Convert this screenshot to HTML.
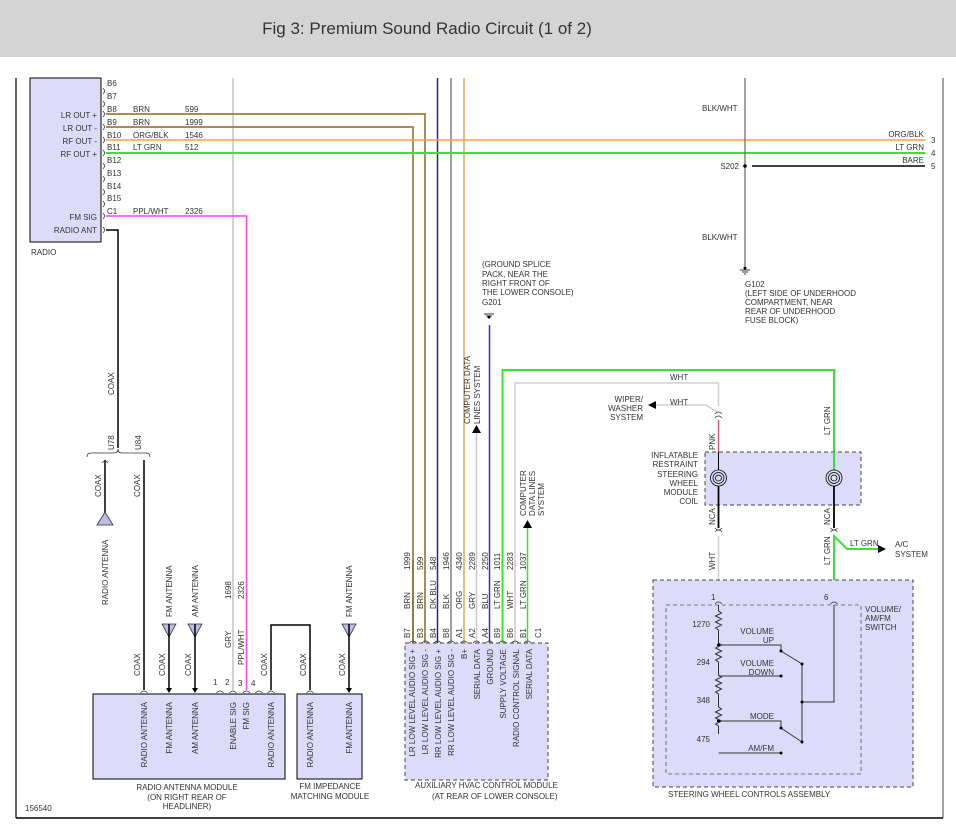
<!DOCTYPE html>
<html><head><meta charset="utf-8"><style>
html,body{margin:0;padding:0;background:#fff;}
svg{display:block;font-family:"Liberation Sans",sans-serif;}
text{font-size:8px;fill:#333;}
</style></head><body>
<svg width="956" height="827" viewBox="0 0 956 827" xmlns="http://www.w3.org/2000/svg">
<rect x="0" y="0" width="956" height="57" fill="#d4d4d4"/>
<text x="427" y="34" text-anchor="middle" style="font-size:17px;fill:#333">Fig 3: Premium Sound Radio Circuit (1 of 2)</text>

<!-- borders -->
<line x1="16" y1="78" x2="16" y2="818" stroke="#000" stroke-width="1.2"/>
<line x1="943" y1="78" x2="943" y2="818" stroke="#666" stroke-width="1.2"/>
<line x1="16" y1="818" x2="943" y2="818" stroke="#000" stroke-width="1.5"/>
<text x="25" y="811">156540</text>

<!-- radio box -->
<rect x="30" y="78" width="71" height="164" fill="#dcdcfa" stroke="#000" stroke-width="1"/>
<text x="31" y="255">RADIO</text>
<g text-anchor="end">
<text x="97" y="118">LR OUT +</text><text x="97" y="131">LR OUT -</text>
<text x="97" y="144">RF OUT -</text><text x="97" y="157">RF OUT +</text>
<text x="97" y="220">FM SIG</text><text x="97" y="233">RADIO ANT</text>
</g>
<g>
<text x="107" y="86">B6</text><text x="107" y="99">B7</text><text x="107" y="112">B8</text>
<text x="107" y="125">B9</text><text x="107" y="138">B10</text><text x="107" y="150">B11</text>
<text x="107" y="163">B12</text><text x="107" y="176">B13</text><text x="107" y="189">B14</text>
<text x="107" y="201">B15</text><text x="107" y="214">C1</text>
</g>
<g fill="none" stroke="#333" stroke-width="0.8">
<path d="M103 88 q3 3 0 6"/><path d="M103 101 q3 3 0 6"/><path d="M103 111 q3 3 0 6"/>
<path d="M103 124 q3 3 0 6"/><path d="M103 137 q3 3 0 6"/><path d="M103 150 q3 3 0 6"/>
<path d="M103 163 q3 3 0 6"/><path d="M103 176 q3 3 0 6"/><path d="M103 189 q3 3 0 6"/>
<path d="M103 201 q3 3 0 6"/><path d="M103 213 q3 3 0 6"/><path d="M103 227 q3 3 0 6"/>
</g>
<g>
<text x="133" y="112">BRN</text><text x="185" y="112">599</text>
<text x="133" y="125">BRN</text><text x="185" y="125">1999</text>
<text x="133" y="138">ORG/BLK</text><text x="185" y="138">1546</text>
<text x="133" y="150">LT GRN</text><text x="185" y="150">512</text>
<text x="133" y="214">PPL/WHT</text><text x="185" y="214">2326</text>
</g>

<!-- vertical top wires -->
<line x1="233" y1="78" x2="233" y2="690" stroke="#c4c4c4" stroke-width="1.5"/>
<line x1="437.5" y1="78" x2="437.5" y2="643" stroke="#1a2a8a" stroke-width="1.5"/>
<line x1="451" y1="78" x2="451" y2="643" stroke="#808080" stroke-width="1.5"/>
<line x1="464" y1="78" x2="464" y2="643" stroke="#f0a050" stroke-width="1.5"/>
<!-- horizontal wires -->
<polyline points="106,114 425,114 425,643" fill="none" stroke="#8a6a1a" stroke-width="1.5"/>
<polyline points="106,127 413,127 413,643" fill="none" stroke="#8a6a1a" stroke-width="1.5"/>
<line x1="106" y1="140" x2="925" y2="140" stroke="#f0a050" stroke-width="1.5"/>
<line x1="106" y1="153" x2="925" y2="153" stroke="#33e633" stroke-width="2"/>
<polyline points="106,216 246.5,216 246.5,690" fill="none" stroke="#ff44ff" stroke-width="1.5"/>
<polyline points="106,230 118,230 118,448" fill="none" stroke="#000" stroke-width="1.5"/>

<!-- right top -->
<line x1="745" y1="78" x2="745" y2="266" stroke="#666" stroke-width="1.2"/>
<text x="702" y="111">BLK/WHT</text>
<text x="702" y="240">BLK/WHT</text>
<circle cx="745" cy="166" r="1.8" fill="#000"/>
<text x="739" y="169" text-anchor="end">S202</text>
<line x1="752" y1="166" x2="925" y2="166" stroke="#000" stroke-width="1.5"/>
<g text-anchor="end"><text x="924" y="137">ORG/BLK</text><text x="924" y="150">LT GRN</text><text x="924" y="163">BARE</text></g>
<text x="931" y="143">3</text><text x="931" y="156">4</text><text x="931" y="169">5</text>
<g stroke="#000" stroke-width="0.8"><line x1="740" y1="270" x2="750" y2="270"/><line x1="742" y1="272" x2="748" y2="272"/><line x1="744" y1="274" x2="746" y2="274"/></g>
<circle cx="745" cy="268" r="1.5" fill="#000"/>
<text x="745" y="287">G102</text>
<text x="745" y="296">(LEFT SIDE OF UNDERHOOD</text>
<text x="745" y="305">COMPARTMENT, NEAR</text>
<text x="745" y="314">REAR OF UNDERHOOD</text>
<text x="745" y="323">FUSE BLOCK)</text>

<!-- G201 -->
<text x="482" y="267">(GROUND SPLICE</text>
<text x="482" y="277">PACK, NEAR THE</text>
<text x="482" y="286">RIGHT FRONT OF</text>
<text x="482" y="295">THE LOWER CONSOLE)</text>
<text x="482" y="305">G201</text>
<g stroke="#000" stroke-width="0.8"><line x1="484" y1="314" x2="494" y2="314"/><line x1="486" y1="316" x2="492" y2="316"/><line x1="488" y1="318" x2="490" y2="318"/></g>
<circle cx="489" cy="317" r="1.5" fill="#000"/>
<line x1="489.5" y1="325" x2="489.5" y2="643" stroke="#2233dd" stroke-width="1.5"/>

<!-- computer data lines 1 -->
<line x1="476.5" y1="432" x2="476.5" y2="643" stroke="#c8c8c8" stroke-width="1.5"/>
<polygon points="476.5,425 472,433 481,433" fill="#000"/>
<text transform="translate(470,424) rotate(-90)">COMPUTER DATA</text>
<text transform="translate(480,424) rotate(-90)">LINES SYSTEM</text>
<!-- computer data lines 2 -->
<line x1="527.5" y1="527" x2="527.5" y2="643" stroke="#33e633" stroke-width="1.5"/>
<polygon points="527.5,520 523,528 532,528" fill="#000"/>
<text transform="translate(526,516) rotate(-90)">COMPUTER</text>
<text transform="translate(535,516) rotate(-90)">DATA LINES</text>
<text transform="translate(544,516) rotate(-90)">SYSTEM</text>

<!-- green loop to steering -->
<polyline points="502.5,643 502.5,370 834,370 834,470" fill="none" stroke="#33e633" stroke-width="2"/>
<text x="670" y="380">WHT</text>
<polyline points="515,643 515,383 718.5,383 718.5,406" fill="none" stroke="#d0d0d0" stroke-width="1.5"/>
<polyline points="717,412 706,405 656,405" fill="none" stroke="#d0d0d0" stroke-width="1.5"/>
<polygon points="648,405 656,401 656,409" fill="#000"/>
<text x="670" y="405">WHT</text>
<g text-anchor="end"><text x="643" y="402">WIPER/</text><text x="643" y="411">WASHER</text><text x="643" y="420">SYSTEM</text></g>
<g fill="none" stroke="#333" stroke-width="0.8"><path d="M715 414 q3.5 -4 7 0"/><path d="M715 418 q3.5 -4 7 0"/></g>
<line x1="718.5" y1="420" x2="718.5" y2="452" stroke="#ee4466" stroke-width="1.2"/>
<text transform="translate(715,450) rotate(-90)">PNK</text>
<text transform="translate(830,435) rotate(-90)">LT GRN</text>

<!-- coil box -->
<rect x="705" y="452" width="156" height="53" fill="#dcdcfa" stroke="#444" stroke-width="1" stroke-dasharray="4,3"/>
<g text-anchor="end">
<text x="698" y="458">INFLATABLE</text><text x="698" y="467">RESTRAINT</text>
<text x="698" y="477">STEERING</text><text x="698" y="486">WHEEL</text>
<text x="698" y="495">MODULE</text><text x="698" y="504">COIL</text>
</g>
<line x1="718.5" y1="452" x2="718.5" y2="470" stroke="#000"/>
<line x1="834" y1="452" x2="834" y2="470" stroke="#33e633" stroke-width="2"/>
<g fill="none" stroke="#000" stroke-width="0.8">
<circle cx="718.5" cy="478" r="8"/><circle cx="718.5" cy="478" r="5.5"/><circle cx="718.5" cy="478" r="3"/>
<circle cx="834" cy="478" r="8"/><circle cx="834" cy="478" r="5.5"/><circle cx="834" cy="478" r="3"/>
</g>
<line x1="718.5" y1="486" x2="718.5" y2="528" stroke="#000" stroke-width="1.8"/>
<line x1="834" y1="486" x2="834" y2="528" stroke="#000" stroke-width="1.8"/>
<g fill="none" stroke="#333" stroke-width="0.8">
<path d="M715 528 q3.5 4 7 0"/><path d="M715 532 q3.5 -4 7 0"/>
<path d="M830.5 528 q3.5 4 7 0"/><path d="M830.5 532 q3.5 -4 7 0"/>
</g>
<text transform="translate(715,525) rotate(-90)">NCA</text>
<text transform="translate(830,525) rotate(-90)">NCA</text>
<line x1="718.5" y1="536" x2="718.5" y2="598" stroke="#d0d0d0" stroke-width="1.5"/>
<text transform="translate(715,570) rotate(-90)">WHT</text>
<polyline points="834,598 834,536 847,549 878,549" fill="none" stroke="#33e633" stroke-width="2"/>
<polygon points="886,549 878,545 878,553" fill="#000"/>
<text x="850" y="546">LT GRN</text>
<text x="895" y="547">A/C</text><text x="895" y="557">SYSTEM</text>
<text transform="translate(830,565) rotate(-90)">LT GRN</text>

<!-- steering box -->
<rect x="653" y="580" width="260" height="207" fill="#dcdcfa" stroke="#444" stroke-width="1" stroke-dasharray="4,3"/>
<rect x="666" y="605" width="195" height="169" fill="none" stroke="#555" stroke-width="0.8" stroke-dasharray="4,3"/>
<text x="668" y="797">STEERING WHEEL CONTROLS ASSEMBLY</text>
<text x="865" y="612">VOLUME/</text><text x="865" y="621">AM/FM</text><text x="865" y="630">SWITCH</text>
<text x="711" y="600">1</text><text x="824" y="600">6</text>
<g fill="none" stroke="#333" stroke-width="0.8">
<path d="M715 604 q3.5 -4 7 0"/><path d="M830.5 604 q3.5 -4 7 0"/>
</g>
<g fill="none" stroke="#333" stroke-width="1">
<path d="M718.5 605 v6 l3 2 l-6 3 l6 3 l-6 3 l6 3 l-6 3 l3 2 v13 l3 2 l-6 3 l6 3 l-6 3 l6 3 l-6 3 l3 2 v13 l3 2 l-6 3 l6 3 l-6 3 l6 3 l-6 3 l3 2 v13 l3 2 l-6 3 l6 3 l-6 3 l6 3 l-6 3 l3 2 v8"/>
<polyline points="718.5,645 781,645 781,651"/>
<polyline points="718.5,676 781,676"/>
<polyline points="718.5,721 781,721 781,728"/>
<polyline points="718.5,753 781,753"/>
<polyline points="781,651 802,664"/>
<polyline points="781,728 802,742"/>
<polyline points="802,664 802,742"/>
<polyline points="802,702 834,702 834,605"/>
</g>
<g fill="#000">
<circle cx="718.5" cy="645" r="1.5"/><circle cx="718.5" cy="721" r="1.5"/>
<circle cx="781" cy="651" r="1.5"/><circle cx="781" cy="676" r="1.5"/>
<circle cx="781" cy="728" r="1.5"/><circle cx="781" cy="753" r="1.5"/>
<circle cx="802" cy="664" r="1.5"/><circle cx="802" cy="742" r="1.5"/><circle cx="802" cy="702" r="1.5"/>
</g>
<g text-anchor="end">
<text x="710" y="627">1270</text><text x="710" y="665">294</text>
<text x="710" y="703">348</text><text x="710" y="742">475</text>
<text x="774" y="634">VOLUME</text><text x="774" y="643">UP</text>
<text x="774" y="666">VOLUME</text><text x="774" y="675">DOWN</text>
<text x="774" y="719">MODE</text><text x="774" y="751">AM/FM</text>
</g>

<!-- HVAC module -->
<rect x="405" y="643" width="143" height="137" fill="#dcdcfa" stroke="#444" stroke-width="1" stroke-dasharray="4,3"/>
<polyline points="515,643 515,643" stroke="#d0d0d0"/>
<g fill="none" stroke="#333" stroke-width="0.8">
<path d="M409.5 643 q3.5 -4 7 0"/><path d="M422 643 q3.5 -4 7 0"/><path d="M434 643 q3.5 -4 7 0"/>
<path d="M447.5 643 q3.5 -4 7 0"/><path d="M460.5 643 q3.5 -4 7 0"/><path d="M473 643 q3.5 -4 7 0"/>
<path d="M486 643 q3.5 -4 7 0"/><path d="M499 643 q3.5 -4 7 0"/><path d="M511.5 643 q3.5 -4 7 0"/>
<path d="M524 643 q3.5 -4 7 0"/>
</g>
<line x1="413" y1="560" x2="413" y2="640" stroke="#8a6a1a" stroke-width="1.5"/>
<line x1="515" y1="560" x2="515" y2="640" stroke="#d0d0d0" stroke-width="1.5"/>
<g>
<text transform="translate(410,570) rotate(-90)">1999</text><text transform="translate(410,609) rotate(-90)">BRN</text><text transform="translate(410,638) rotate(-90)">B7</text>
<text transform="translate(423,570) rotate(-90)">599</text><text transform="translate(423,609) rotate(-90)">BRN</text><text transform="translate(423,638) rotate(-90)">B3</text>
<text transform="translate(436,570) rotate(-90)">548</text><text transform="translate(436,609) rotate(-90)">DK BLU</text><text transform="translate(436,638) rotate(-90)">B4</text>
<text transform="translate(449,570) rotate(-90)">1946</text><text transform="translate(449,609) rotate(-90)">BLK</text><text transform="translate(449,638) rotate(-90)">B8</text>
<text transform="translate(462,570) rotate(-90)">4340</text><text transform="translate(462,609) rotate(-90)">ORG</text><text transform="translate(462,638) rotate(-90)">A1</text>
<text transform="translate(475,570) rotate(-90)">2289</text><text transform="translate(475,609) rotate(-90)">GRY</text><text transform="translate(475,638) rotate(-90)">A2</text>
<text transform="translate(488,570) rotate(-90)">2250</text><text transform="translate(488,609) rotate(-90)">BLU</text><text transform="translate(488,638) rotate(-90)">A4</text>
<text transform="translate(500,570) rotate(-90)">1011</text><text transform="translate(500,609) rotate(-90)">LT GRN</text><text transform="translate(500,638) rotate(-90)">B9</text>
<text transform="translate(513,570) rotate(-90)">2283</text><text transform="translate(513,609) rotate(-90)">WHT</text><text transform="translate(513,638) rotate(-90)">B6</text>
<text transform="translate(526,570) rotate(-90)">1037</text><text transform="translate(526,609) rotate(-90)">LT GRN</text><text transform="translate(526,638) rotate(-90)">B1</text>
<text transform="translate(541,638) rotate(-90)">C1</text>
</g>
<g text-anchor="end">
<text transform="translate(415,649) rotate(-90)">LR LOW LEVEL AUDIO SIG +</text>
<text transform="translate(428,649) rotate(-90)">LR LOW LEVEL AUDIO SIG -</text>
<text transform="translate(441,649) rotate(-90)">RR LOW LEVEL AUDIO SIG +</text>
<text transform="translate(454,649) rotate(-90)">RR LOW LEVEL AUDIO SIG -</text>
<text transform="translate(467,649) rotate(-90)">B+</text>
<text transform="translate(480,649) rotate(-90)">SERIAL DATA</text>
<text transform="translate(493,649) rotate(-90)">GROUND</text>
<text transform="translate(506,649) rotate(-90)">SUPPLY VOLTAGE</text>
<text transform="translate(519,649) rotate(-90)">RADIO CONTROL SIGNAL</text>
<text transform="translate(532,649) rotate(-90)">SERIAL DATA</text>
</g>
<text x="415" y="788">AUXILIARY HVAC CONTROL MODULE</text>
<text x="432" y="799">(AT REAR OF LOWER CONSOLE)</text>

<!-- antenna area -->
<text transform="translate(114,450) rotate(-90)">U78</text>
<text transform="translate(141,450) rotate(-90)">U84</text>
<path d="M87 457 q0 -4 4 -4 h23 q4 0 4 -4 q0 4 4 4 h24 q4 0 4 4" fill="none" stroke="#333" stroke-width="0.8"/>
<line x1="105" y1="460" x2="105" y2="515" stroke="#000" stroke-width="1.5"/>
<path d="M102 463 q3 -4 6 0" fill="none" stroke="#333" stroke-width="0.8"/>
<polygon points="97,525 105,512 113,525" fill="#bcbce8" stroke="#333" stroke-width="0.8"/>
<text transform="translate(101,497) rotate(-90)">COAX</text>
<text transform="translate(108,605) rotate(-90)">RADIO ANTENNA</text>
<line x1="144" y1="460" x2="144" y2="690" stroke="#000" stroke-width="1.5"/>
<text transform="translate(140,497) rotate(-90)">COAX</text>
<text transform="translate(140,676) rotate(-90)">COAX</text>
<text transform="translate(114,395) rotate(-90)">COAX</text>

<polygon points="162,624 176,624 169,637" fill="#bcbce8" stroke="#333" stroke-width="0.8"/>
<line x1="169" y1="624" x2="169" y2="690" stroke="#000" stroke-width="1.5"/>
<text transform="translate(172,617) rotate(-90)">FM ANTENNA</text>
<text transform="translate(165,676) rotate(-90)">COAX</text>
<polygon points="188,624 202,624 195,637" fill="#bcbce8" stroke="#333" stroke-width="0.8"/>
<line x1="195" y1="624" x2="195" y2="690" stroke="#000" stroke-width="1.5"/>
<text transform="translate(198,617) rotate(-90)">AM ANTENNA</text>
<text transform="translate(191,676) rotate(-90)">COAX</text>
<text transform="translate(231,599) rotate(-90)">1698</text>
<text transform="translate(231,648) rotate(-90)">GRY</text>
<text transform="translate(244,599) rotate(-90)">2326</text>
<text transform="translate(244,665) rotate(-90)">PPL/WHT</text>
<polyline points="271,690 271,625 310,625 310,690" fill="none" stroke="#000" stroke-width="1.5"/>
<text transform="translate(267,676) rotate(-90)">COAX</text>
<text transform="translate(306,676) rotate(-90)">COAX</text>
<polygon points="342,624 356,624 349,637" fill="#bcbce8" stroke="#333" stroke-width="0.8"/>
<line x1="349" y1="624" x2="349" y2="690" stroke="#000" stroke-width="1.5"/>
<text transform="translate(352,617) rotate(-90)">FM ANTENNA</text>
<text transform="translate(345,676) rotate(-90)">COAX</text>
<text x="213" y="685">1</text><text x="225" y="685">2</text><text x="238" y="686">3</text><text x="251" y="686">4</text>
<g fill="none" stroke="#333" stroke-width="0.8">
<path d="M140.5 693 q3.5 -4 7 0"/><path d="M216.5 693 q3.5 -4 7 0"/><path d="M229.5 693 q3.5 -4 7 0"/>
<path d="M243 693 q3.5 -4 7 0"/><path d="M255.5 693 q3.5 -4 7 0"/><path d="M267.5 693 q3.5 -4 7 0"/>
<path d="M306.5 693 q3.5 -4 7 0"/>
</g>
<g fill="#000"><polygon points="166,688 172,688 169,693"/><polygon points="192,688 198,688 195,693"/><polygon points="346,688 352,688 349,693"/></g>

<rect x="93" y="694" width="192" height="85" fill="#dcdcfa" stroke="#000" stroke-width="1"/>
<rect x="297" y="694" width="65" height="85" fill="#dcdcfa" stroke="#000" stroke-width="1"/>
<g text-anchor="end">
<text transform="translate(147,702) rotate(-90)">RADIO ANTENNA</text>
<text transform="translate(172,702) rotate(-90)">FM ANTENNA</text>
<text transform="translate(198,702) rotate(-90)">AM ANTENNA</text>
<text transform="translate(236,702) rotate(-90)">ENABLE SIG</text>
<text transform="translate(249,702) rotate(-90)">FM SIG</text>
<text transform="translate(274,702) rotate(-90)">RADIO ANTENNA</text>
<text transform="translate(313,702) rotate(-90)">RADIO ANTENNA</text>
<text transform="translate(352,702) rotate(-90)">FM ANTENNA</text>
</g>
<g text-anchor="middle">
<text x="187" y="790">RADIO ANTENNA MODULE</text>
<text x="187" y="800">(ON RIGHT REAR OF</text>
<text x="187" y="809">HEADLINER)</text>
<text x="330" y="789">FM IMPEDANCE</text>
<text x="330" y="799">MATCHING MODULE</text>
</g>
</svg>
</body></html>
